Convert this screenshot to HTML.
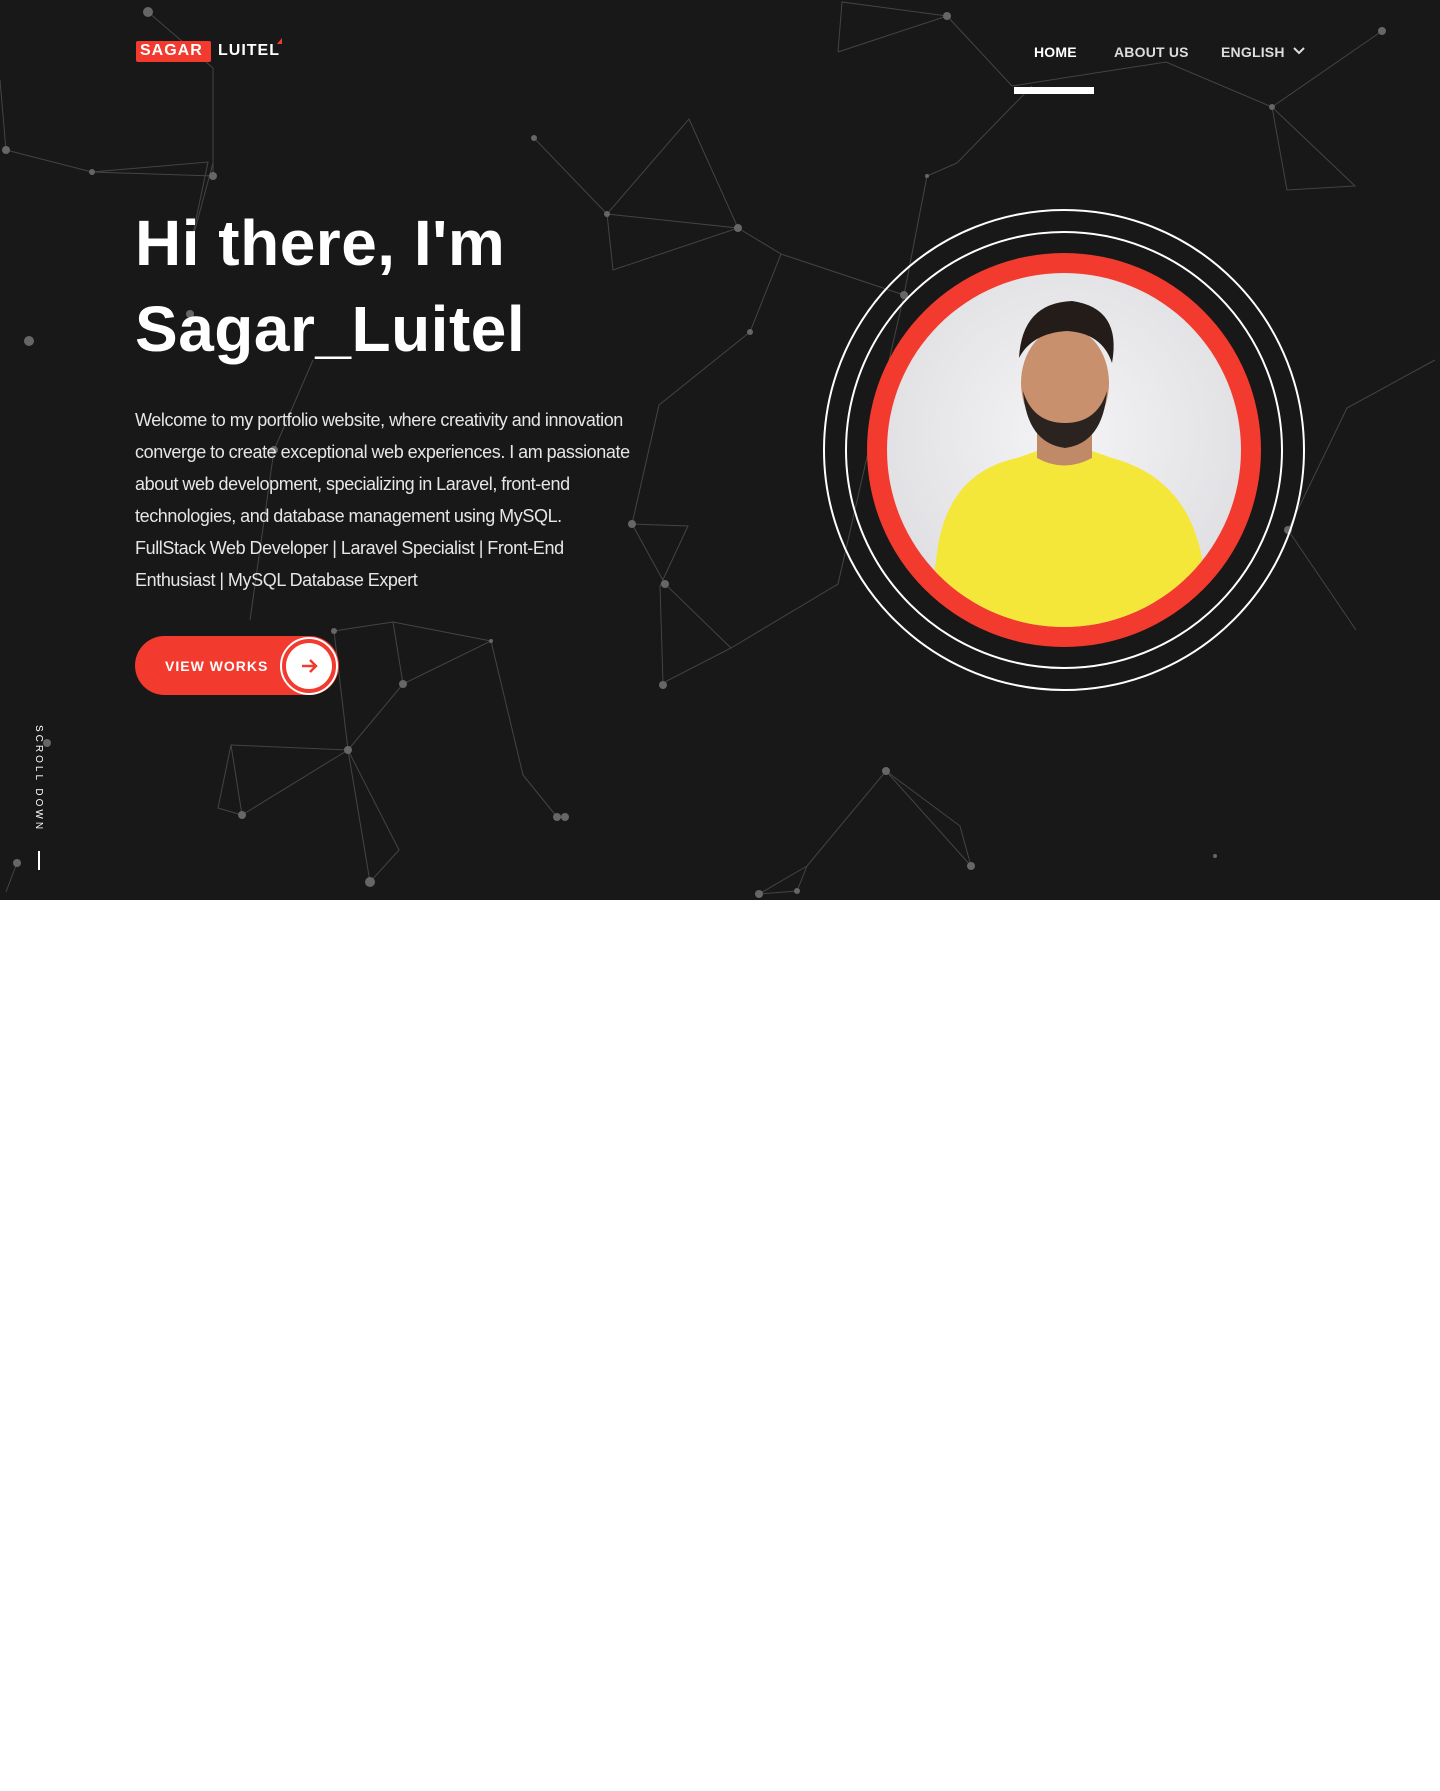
<!DOCTYPE html>
<html><head><meta charset="utf-8"><style>
*{margin:0;padding:0;box-sizing:border-box}
body{width:1440px;height:1791px;background:#fff;font-family:"Liberation Sans",sans-serif;position:relative;overflow:hidden}
.hero{position:absolute;left:0;top:0;width:1440px;height:900px;background:#181818;overflow:hidden}
.abs{position:absolute}
.nav a{position:absolute;top:44px;font-size:14px;font-weight:bold;color:#ddd;text-decoration:none;letter-spacing:.2px}
h1{position:absolute;left:135px;top:200px;font-size:64px;line-height:86px;font-weight:bold;color:#fff;letter-spacing:.5px}
p.intro{position:absolute;left:135px;top:404px;width:505px;font-size:18px;line-height:32px;color:#e6e6e6;letter-spacing:-.4px;word-spacing:-.3px}
</style></head><body>
<div class="hero">
<svg class="abs" style="left:0;top:0" width="1440" height="900">
<g stroke="#444" stroke-width="1" fill="none">
<polyline points="148,12 213,68 213,176 92,172 6,150 0,80"/>
<polyline points="213,163 190,248 208,162 92,172"/>
<polyline points="838,52 947,16 842,2 838,52"/>
<polyline points="947,16 1012,86 1166,62 1272,107 1355,186 1287,190 1272,107 1382,31"/>
<polyline points="1032,86 957,163 927,176 904,295"/>
<polyline points="534,138 607,214 738,228 689,119 607,214 613,270 738,228 781,254 750,332 659,405 632,524 665,584 731,648 663,683 660,586 688,526 632,524"/>
<polyline points="781,254 904,295"/>
<polyline points="1435,360 1347,408 1288,530 1356,630"/>
<polyline points="731,648 838,584 904,295"/>
<polyline points="334,631 393,622 403,684 491,641 393,622"/>
<polyline points="403,684 348,750 334,631 348,750 231,745 218,808 242,815 231,745"/>
<polyline points="348,750 242,815"/>
<polyline points="348,750 399,850 370,882 348,750"/>
<polyline points="491,641 523,775 557,817"/>
<polyline points="886,771 960,826 971,866 886,771 807,866 759,894 797,891 807,866"/>
<polyline points="17,863 6,892"/>
<polyline points="313,360 274,450 250,620"/>
</g>
<g fill="#666">
<circle cx="148" cy="12" r="5"/><circle cx="947" cy="16" r="4"/><circle cx="6" cy="150" r="4"/><circle cx="92" cy="172" r="3"/><circle cx="213" cy="176" r="4"/><circle cx="190" cy="314" r="4"/><circle cx="29" cy="341" r="5"/><circle cx="607" cy="214" r="3"/><circle cx="738" cy="228" r="4"/><circle cx="750" cy="332" r="3"/><circle cx="1272" cy="107" r="3"/><circle cx="1382" cy="31" r="4"/><circle cx="927" cy="176" r="2"/><circle cx="904" cy="295" r="4"/><circle cx="632" cy="524" r="4"/><circle cx="665" cy="584" r="4"/><circle cx="663" cy="685" r="4"/><circle cx="334" cy="631" r="3"/><circle cx="403" cy="684" r="4"/><circle cx="491" cy="641" r="2"/><circle cx="348" cy="750" r="4"/><circle cx="242" cy="815" r="4"/><circle cx="370" cy="882" r="5"/><circle cx="557" cy="817" r="4"/><circle cx="565" cy="817" r="4"/><circle cx="886" cy="771" r="4"/><circle cx="971" cy="866" r="4"/><circle cx="759" cy="894" r="4"/><circle cx="797" cy="891" r="3"/><circle cx="17" cy="863" r="4"/><circle cx="47" cy="743" r="4"/><circle cx="1215" cy="856" r="2"/><circle cx="1288" cy="530" r="4"/><circle cx="274" cy="450" r="4"/><circle cx="534" cy="138" r="3"/>
</g>
</svg>
<!-- logo -->
<div class="abs" style="left:136px;top:41px;width:75px;height:21px;background:#f23a2f;border-radius:2px"></div>
<div class="abs" style="left:140px;top:42px;font-size:16px;font-weight:bold;color:#fff;letter-spacing:1px">SAGAR</div>
<div class="abs" style="left:218px;top:42px;font-size:16px;font-weight:bold;color:#fff;letter-spacing:1px">LUITEL</div>
<div class="abs" style="left:277px;top:38px;width:0;height:0;border-left:5px solid transparent;border-bottom:6px solid #f23a2f"></div>
<div class="nav">
<a style="left:1034px;color:#fff">HOME</a>
<a style="left:1114px">ABOUT US</a>
<a style="left:1221px">ENGLISH</a>
</div>
<svg class="abs" style="left:1293px;top:46px" width="12" height="10"><polyline points="1,2 6,7 11,2" stroke="#ddd" stroke-width="2" fill="none"/></svg>
<div class="abs" style="left:1014px;top:87px;width:80px;height:7px;background:#fff"></div>
<h1>Hi there, I'm<br>Sagar_Luitel</h1>
<p class="intro">Welcome to my portfolio website, where creativity and innovation converge to create exceptional web experiences. I am passionate about web development, specializing in Laravel, front-end technologies, and database management using MySQL.<br>FullStack Web Developer | Laravel Specialist | Front-End<br>Enthusiast | MySQL Database Expert</p>
<div class="abs" style="left:135px;top:636px;width:204px;height:59px;background:#f23a2f;border-radius:30px"></div>
<div class="abs" style="left:165px;top:658px;font-size:14px;font-weight:bold;color:#fff;letter-spacing:1px">VIEW WORKS</div>
<div class="abs" style="left:280px;top:637px;width:58px;height:58px;border:2px solid #fff;border-radius:50%"></div>
<div class="abs" style="left:286px;top:643px;width:46px;height:46px;background:#fff;border-radius:50%"></div>
<svg class="abs" style="left:300px;top:657px" width="18" height="18"><path d="M2 9H16M10 3L16 9L10 15" stroke="#f23a2f" stroke-width="2.5" fill="none"/></svg>
<div class="abs" style="left:33px;top:725px;writing-mode:vertical-rl;font-size:10px;color:#fff;letter-spacing:3px">SCROLL DOWN</div>
<div class="abs" style="left:38px;top:851px;width:2px;height:19px;background:#fff"></div>
<!-- portrait -->
<div class="abs" style="left:823px;top:209px;width:482px;height:482px;border:2px solid #fff;border-radius:50%"></div>
<div class="abs" style="left:845px;top:231px;width:438px;height:438px;border:2px solid #fff;border-radius:50%"></div>
<div class="abs" style="left:867px;top:253px;width:394px;height:394px;background:#f23a2f;border-radius:50%"></div>
<div class="abs" style="left:887px;top:273px;width:354px;height:354px;border-radius:50%;overflow:hidden;background:radial-gradient(circle at 50% 45%,#f4f4f6,#d9d9dd)">
<svg width="354" height="354">
<path d="M50 280 Q60 200 130 185 L150 178 Q177 195 205 178 L225 185 Q300 205 315 285 L320 354 L40 354 Z" fill="#f5e63a"/>
<path d="M150 150 L150 185 Q177 200 205 185 L205 150 Z" fill="#c08a68"/>
<ellipse cx="178" cy="110" rx="44" ry="56" fill="#c9906e"/>
<path d="M136 118 Q140 170 178 175 Q216 170 220 118 Q210 150 178 150 Q146 150 136 118Z" fill="#2a2320"/>
<path d="M132 85 Q135 30 185 28 Q235 35 225 90 Q215 60 180 58 Q145 60 132 85Z" fill="#231c18"/>
</svg>
</div>
</div>
</body></html>
